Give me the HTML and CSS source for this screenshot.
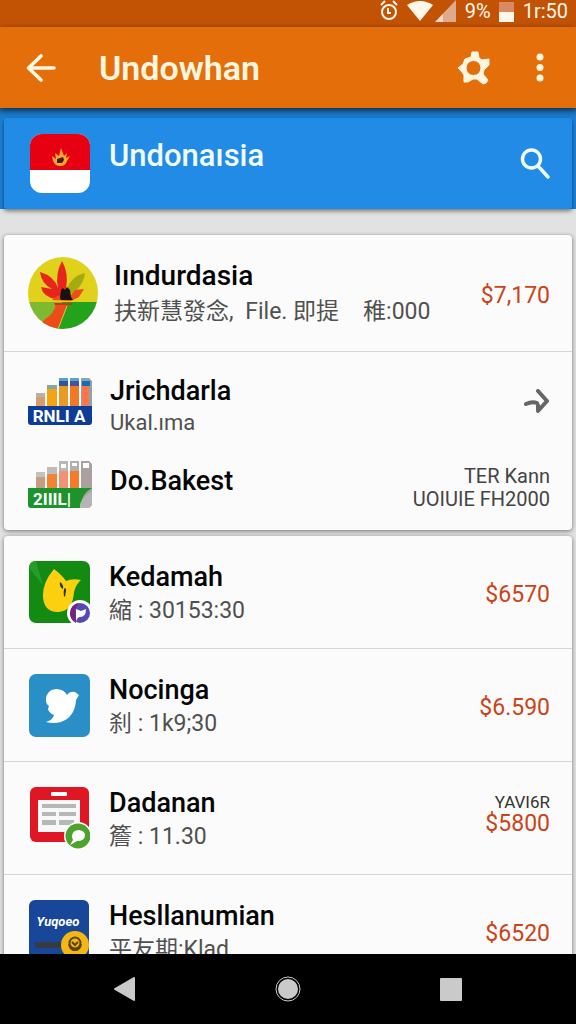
FILE: index.html
```html
<!DOCTYPE html>
<html lang="id">
<head>
<meta charset="utf-8">
<meta name="viewport" content="width=device-width, initial-scale=1">
<title>Undowhan</title>
<link rel="stylesheet" href="styles.css">
</head>
<body>
<div class="app">
  <div class="status">
    <svg class="status-alarm" viewBox="0 0 20 22" width="20" height="22" fill="none" stroke="currentColor" stroke-width="2"><circle cx="10" cy="12" r="7"/><path d="M2 5l4-4M18 5l-4-4M9 8v5h3"/></svg>
    <svg class="status-wifi" viewBox="0 0 26 20" width="26" height="20"><path fill="currentColor" d="M0 4Q13-4 26 4L13 20z"/></svg>
    <svg class="status-signal" viewBox="0 0 21 22" width="21" height="22"><path fill="#e0a98c" d="M21 0v22H0z"/><path fill="#f3d8c8" d="M8 14v8H0z"/></svg>
    <span class="status-percent">9%</span>
    <svg class="status-battery" viewBox="0 0 15 21" width="15" height="21"><path fill="#d98a62" d="M0 1h15v10H0z"/><path fill="currentColor" d="M0 11h15v10H0z"/></svg>
    <span class="status-time">1r:50</span>
  </div>

  <header class="appbar">
    <button class="icon-button" type="button" aria-label="Back">
      <svg viewBox="0 0 30 30" width="30" height="30" fill="none" stroke="currentColor" stroke-width="3.6" stroke-linecap="round" stroke-linejoin="round"><path d="M15 3L2.500 15 15 27M3 15h25" /></svg>
    </button>
    <h1 class="appbar-title">Undowhan</h1>
    <button class="icon-button" type="button" aria-label="Settings">
      <svg viewBox="0 0 34 34" width="34" height="34"><path fill="currentColor" stroke="currentColor" stroke-linejoin="round" fill-rule="evenodd" d="M14 1h6l1 6 3 2 7-1v6l-3 3-2 2-1 4 5 6-2 3-3 1-6-5h-4l-5 3H6v-7l-2-3-4-4 5-4 2-5 6-2zM15.500 9.500a7.500 7.500 0 1 0 0 15 7.500 7.500 0 1 0 0-15z"/></svg>
    </button>
    <button class="icon-button icon-button-more" type="button" aria-label="More options">
      <svg viewBox="0 0 8 30" width="8" height="30" fill="currentColor"><circle cx="4" cy="4" r="3.500"/><circle cx="4" cy="14.500" r="3.500"/><circle cx="4" cy="25" r="3.500"/></svg>
    </button>
  </header>

  <main class="content">
    <div class="banner-band">
      <section class="banner">
        <svg class="banner-flag" viewBox="0 0 60 60" width="60" height="60">
          <rect width="60" height="59" rx="12" fill="#fff"/>
          <path fill="#e60012" d="M0 36V12A12 12 0 0 1 12 0h36a12 12 0 0 1 12 12v24z"/>
          <path fill="#f9a832" d="M22 22l4 3-1-6 4 3 2-8 3 8 3-3-1 5 4-2-3 5c-1 4-4 5-7 5s-6-2-7-5z"/>
          <path fill="#4d160b" d="M27 25l6-2 1 3-2 3h-5z"/>
        </svg>
        <h2 class="banner-title">Undonaısia</h2>
        <button class="icon-button" type="button" aria-label="Search">
          <svg viewBox="0 0 30 32" width="30" height="32" fill="none" stroke="currentColor" stroke-width="3.500" stroke-linecap="round"><circle cx="11.500" cy="11" r="9"/><path d="M18 18l10 11"/></svg>
        </button>
      </section>
    </div>

    <section class="card">
      <article class="row row-lead">
        <svg class="icon-lead" viewBox="0 0 70 72" width="70" height="72">
          <defs><clipPath id="disc"><ellipse cx="35" cy="36" rx="35" ry="36"/></clipPath></defs>
          <g clip-path="url(#disc)">
            <path fill="#dfd11c" d="M0 0h70v46H0z"/>
            <path fill="#7fb92f" d="M0 45h36v27H0z"/>
            <path fill="#22a31b" d="M34 45h36v27H28z"/>
            <path fill="#ee4b1a" d="M28 47h12L30 72H10l6-9q11-7 12-16z"/>
            <path fill="none" stroke="#d9cb3b" d="M39 49L30 72"/>
          </g>
          <path fill="#a5aa10" d="M38 34q5-15 19-18-2 15-16 22z"/>
          <path fill="#e8251a" d="M34 4q7 12 4 28l-3 10h-7q-13-2-15-12l11 2Q13 26 12 15q14 4 18 16Q27 17 34 4z"/>
          <path fill="#ef4c18" d="M43 38l4-5 9-1-5 8-8 4-19-1 5-4z"/>
          <path fill="#19120e" d="M32 41l1-8 2-2 2 2 2-3 3 3 1 7 2 3H33z"/>
          <path fill="#cf3514" d="M26 46h18v2H27z"/>
        </svg>
        <div class="row-text">
          <h3 class="row-title">Iındurdasia</h3>
          <p class="row-sub">扶新慧發念, <span class="lead-part">File. 即提</span><span class="lead-part-wide">稚:000</span></p>
        </div>
        <p class="row-price">$7,170</p>
      </article>

      <div class="group">
        <article class="row row-compact">
          <svg class="icon-app" viewBox="0 0 64 48" width="64" height="48">
            <path fill="#d99a70" d="M8 16h9v13H8z"/><path fill="#aeb7ac" d="M8 15h9v4H8z"/>
            <path fill="#f5a313" d="M19 9h10v20H19z"/><path fill="#7eaaa2" d="M19 7h10v4H19z"/>
            <path fill="#e89b24" d="M31 3h9v26h-9z"/><path fill="#31569b" d="M31 0h9v8h-9z"/>
            <path fill="#f17824" d="M42 6h9v23h-9z"/><path fill="#45549a" d="M42 0h9v8h-9z"/>
            <path fill="#8da4ad" d="M53 0h8l3 3v26H53z"/><path fill="#ff7548" d="M54 8h7v21h-7z"/><path fill="#176cb6" d="M54 3h8v5h-8z"/>
            <path fill="#5aa4cc" d="M31 0h9v3h-9zM42 0h9v3h-9z"/>
            <path fill="#0d3c99" d="M0 28h64v16q0 3-3 3H3q-3 0-3-3z"/>
            <text class="logo-text" x="31" y="44" text-anchor="middle">RNLI A</text>
          </svg>
          <div class="row-text">
            <h3 class="row-title">Jrichdarla</h3>
            <p class="row-sub row-sub-small">Ukal.ıma</p>
          </div>
          <a class="row-go" href="#detail" aria-label="Open Jrichdarla">
            <svg viewBox="0 0 28 26" width="28" height="26" fill="none" stroke="currentColor" stroke-width="4" stroke-linecap="round" stroke-linejoin="round"><path d="M16 2l9 10-9 10v-6M4 15q6-3 11-1"/></svg>
          </a>
        </article>

        <article class="row row-compact">
          <svg class="icon-app" viewBox="0 0 64 48" width="64" height="48">
            <path fill="#c99b80" d="M8 14h9v15H8z"/><path fill="#c2c2c2" d="M8 11h9v5H8z"/>
            <path fill="#f18335" d="M19 12h10v17H19z"/><path fill="#bdbdbd" d="M19 6h10v7H19z"/>
            <path fill="#f09273" d="M31 9h9v20h-9z"/><path fill="#b8b8b8" d="M31 0h9v10h-9z"/><path fill="#fff" d="M33 3h5v4h-5z"/>
            <path fill="#f57b29" d="M42 9h9v20h-9z"/><path fill="#b4aeae" d="M42 0h9v10h-9z"/><path fill="#fff" d="M44 2h5v3h-5z"/>
            <path fill="#aaa0a0" d="M53 0h8l3 3v41l-3 3h-8z"/><path fill="#fff" d="M55 2h6v5h-6z"/>
            <path fill="#1c932b" d="M0 27h64q-11 6-12 20H3q-3 0-3-3z"/><path fill="#b5b5b5" d="M64 30v14l-3 3h-9q0-10 12-17z"/>
            <text class="logo-text" x="24" y="44" text-anchor="middle">2IIIL|</text>
          </svg>
          <div class="row-text row-text-single">
            <h3 class="row-title">Do.Bakest</h3>
          </div>
          <p class="row-note">TER Kann<br>UOIUIE FH2000</p>
        </article>
      </div>
    </section>

    <section class="card">
      <article class="row">
        <svg class="icon-app" viewBox="0 0 62 64" width="62" height="64">
          <rect x="1" y="1" width="61" height="62" rx="7" fill="#138a12"/>
          <path fill="#289c2a" d="M1 8q0-7 7-7l7 24z"/>
          <path fill="#fdd00f" d="M26 9q8 6 12 12 6-3 15-1-5 4-7 12-1 19-16 20-15 0-15-17Q15 22 26 9z"/>
          <path fill="#20371a" d="M32 22q4 3 3 7-4-2-3-7zM36 29q2-3 2 2l-1 6q-2-1-1-8z"/>
          <circle cx="52" cy="53" r="13" fill="#fff"/><circle cx="52" cy="53" r="10" fill="#5549b5"/>
          <path fill="#7b207c" d="M42 53q1-9 9-10l-4 6 1 14q-6-3-6-10z"/>
          <path fill="#fff" d="M48 49l5 2 5-2q0 8-6 8-3 0-4 5z"/>
        </svg>
        <div class="row-text">
          <h3 class="row-title">Kedamah</h3>
          <p class="row-sub">縮 : 30153:30</p>
        </div>
        <p class="row-price">$6570</p>
      </article>

      <article class="row">
        <svg class="icon-app" viewBox="0 0 62 64" width="62" height="64">
          <rect x="1" y="1" width="61" height="63" rx="7" fill="#2a8fc7"/>
          <path fill="#fff" d="M18 27q0-10 10-11 8 0 11 6 3-4 8-3l4 3-3 5q-1 17-15 22-8 2-15 0 7-2 8-7-5-2-6-6l1-3q-3-2-3-6z"/>
        </svg>
        <div class="row-text">
          <h3 class="row-title">Nocinga</h3>
          <p class="row-sub">刹 : 1k9;30</p>
        </div>
        <p class="row-price">$6.590</p>
      </article>

      <article class="row">
        <svg class="icon-app" viewBox="0 0 62 64" width="62" height="64">
          <rect x="2" y="1" width="59" height="55" rx="6" fill="#df1623"/>
          <rect x="23" y="6" width="16" height="4" rx="1" fill="#fff"/>
          <path fill="#f8f8f8" d="M10 14h42v32H10z"/>
          <path fill="#b5b8b8" d="M14 18h34v4H14zM14 26h14v4H14zM31 26h17v4H31zM14 34h14v5H14zM31 34h15v5H31z"/>
          <circle cx="50" cy="50" r="14" fill="#fff"/><circle cx="50" cy="50" r="12.500" fill="#4da32b"/>
          <path fill="#fff" d="M44 51q0-7 7-7 6 1 6 5 0 6-8 6l-5 3-2 1 3-5z"/>
        </svg>
        <div class="row-text">
          <h3 class="row-title">Dadanan</h3>
          <p class="row-sub">簷 : 11.30</p>
        </div>
        <div class="row-side">
          <p class="row-tag">YAVI6R</p>
          <p class="row-price">$5800</p>
        </div>
      </article>

      <article class="row">
        <svg class="icon-app" viewBox="0 0 62 64" width="62" height="64">
          <rect x="1" y="1" width="60" height="63" rx="6" fill="#184698"/>
          <text class="logo-script" x="30" y="27" text-anchor="middle">Yuqoeo</text>
          <rect x="7" y="43" width="34" height="6" fill="#343b43"/>
          <circle cx="47" cy="46" r="14" fill="#f4b713"/>
          <g fill="none" stroke="#5b430c" stroke-width="2"><circle cx="47" cy="44" r="5.500"/><path d="M44 43l3 3 3-3M41 45q1 6 6 6t6-6"/></g>
        </svg>
        <div class="row-text">
          <h3 class="row-title">Hesllanumian</h3>
          <p class="row-sub">平友期:Klad</p>
        </div>
        <p class="row-price">$6520</p>
      </article>
    </section>
  </main>

  <nav class="navbar" aria-label="System">
    <button class="nav-button" type="button" aria-label="Back"><svg viewBox="0 0 26 26" width="26" height="26"><path fill="currentColor" stroke="currentColor" stroke-width="2" stroke-linejoin="round" d="M3 13L22 2v22z"/></svg></button>
    <button class="nav-button" type="button" aria-label="Home"><svg viewBox="0 0 26 26" width="26" height="26"><circle cx="13" cy="13" r="12" fill="none" stroke="currentColor"/><circle cx="13" cy="13" r="10" fill="currentColor"/></svg></button>
    <button class="nav-button" type="button" aria-label="Recent apps"><svg viewBox="0 0 26 26" width="26" height="26"><rect x="2" y="2" width="22" height="23" rx="1" fill="currentColor"/></svg></button>
  </nav>
</div>
</body>
</html>
```

FILE: styles.css
```css
* {
  box-sizing: border-box;
}

body,
h1,
h2,
h3,
p {
  margin: 0;
}

body {
  font-family: Roboto, "Noto Sans CJK SC", sans-serif;
  color: #050505;
  background: #e3e2e2;
}

svg {
  display: block;
  flex: none;
}

button {
  padding: 0;
  border: 0;
  background: none;
  color: inherit;
  font: inherit;
}

.app {
  display: flex;
  flex-direction: column;
  height: 100vh;
}

.status {
  display: flex;
  flex: none;
  align-items: center;
  justify-content: flex-end;
  height: 27px;
  padding: 0 8px 5px;
  background: #c25304;
  color: #fff8ea;
  font-size: 20px;
  line-height: 22px;
}

.status-wifi {
  margin-left: 8px;
}

.status-signal {
  margin-left: 2px;
}

.status-percent {
  margin-left: 9px;
}

.status-battery {
  margin: 0 9px 0 8px;
}

.appbar {
  display: flex;
  flex: none;
  align-items: center;
  height: 81px;
  padding: 0 32px 0 26px;
  background: #e36e0a;
  color: #fff6e0;
  position: relative;
  box-shadow: 0 2px 6px rgba(0, 0, 0, 0.6);
}

.appbar-title {
  flex: 1;
  margin-left: 43px;
  font-size: 34px;
  font-weight: 600;
  line-height: 42px;
}

.icon-button-more {
  margin-left: 44px;
}

.content {
  flex: 1;
  min-height: 0;
  overflow-y: auto;
  scrollbar-width: none;
}

.banner-band {
  padding: 10px 4px 0;
  background: linear-gradient(#1769b0, #1c80d6 10px);
  margin-bottom: 26px;
}

.banner {
  display: flex;
  align-items: center;
  height: 91px;
  padding: 0 22px 0 26px;
  border-radius: 3px;
  background: #218be6;
  color: #f1fbff;
  box-shadow: 0 2px 4px rgba(0, 0, 0, 0.5);
}

.banner-title {
  flex: 1;
  margin: 0 0 16px 19px;
  font-size: 31px;
  font-weight: 500;
  line-height: 38px;
}

.card {
  margin: 0 4px 6px;
  border-radius: 4px;
  background: #fbfbfb;
  box-shadow: 0 1px 4px rgba(0, 0, 0, 0.5);
}

.row {
  display: flex;
  align-items: center;
  min-height: 113px;
  padding: 0 22px 0 24px;
  border-bottom: 1px solid #d6d6d6;
}

.row-lead {
  min-height: 117px;
}

.row-compact {
  min-height: 83px;
  border-bottom: 0;
}

.group {
  padding: 8px 0 4px;
}

.row-text {
  flex: 1;
  min-width: 0;
  margin-left: 19px;
  padding-top: 4px;
  white-space: nowrap;
}

.row-lead .row-text {
  margin-left: 16px;
}

.row-lead .row-title {
  font-size: 28px;
}

.row-compact .row-text {
  margin-left: 18px;
  padding-top: 8px;
}

.row-compact .row-text-single {
  padding: 0 0 8px;
}

.row-title {
  font-size: 27px;
  font-weight: 500;
  line-height: 34px;
}

.row-sub {
  color: #505050;
  font-size: 23px;
  line-height: 34px;
}

.row-lead .row-sub {
  line-height: 38px;
}

.row-compact .row-sub-small {
  font-size: 22px;
  line-height: 30px;
}

.lead-part {
  margin-left: 6px;
}

.lead-part-wide {
  margin-left: 24px;
}

.row-price {
  padding-top: 6px;
  color: #cb4318;
  font-size: 23px;
  line-height: 28px;
}

.row-go {
  color: #666;
}

.row-note {
  padding-top: 6px;
  color: #444;
  font-size: 20px;
  line-height: 23px;
  text-align: right;
}

.row-side {
  padding-bottom: 8px;
  text-align: right;
}

.row-side .row-price {
  padding-top: 0;
  line-height: 24px;
}

.row-tag {
  color: #333;
  font-size: 17px;
  line-height: 20px;
}

.logo-text {
  fill: #fff;
  font-size: 17px;
  font-weight: 700;
}

.logo-script {
  fill: #fff;
  font-size: 13px;
  font-style: italic;
  font-weight: 700;
}

.navbar {
  display: grid;
  flex: none;
  grid-template-columns: repeat(3, 1fr);
  align-items: center;
  height: 70px;
  padding: 0 43px;
  background: #000;
  color: #cacaca;
}

.nav-button {
  display: flex;
  justify-content: center;
}
```
